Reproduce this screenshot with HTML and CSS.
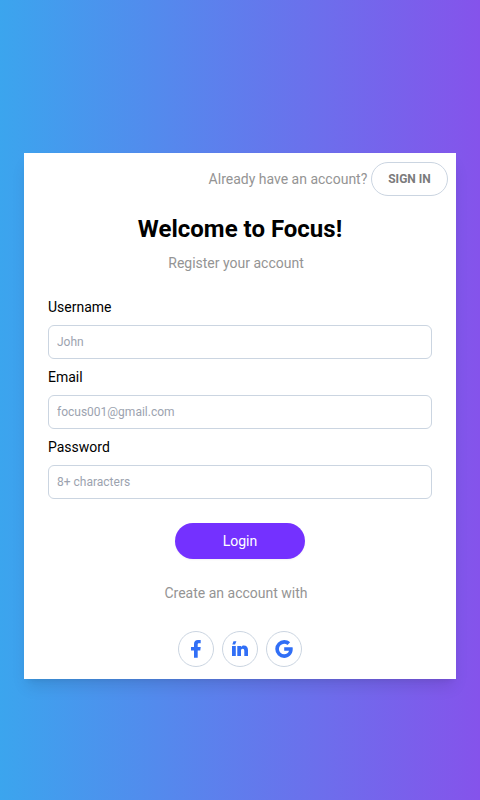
FILE: index.html
```html
<!DOCTYPE html>
<html lang="en">
<head>
<meta charset="utf-8">
<title>Focus</title>
<link rel="stylesheet" href="styles.css">
</head>
<body>
<main class="card">
  <div class="top"><span class="muted">Already have an account?</span><button class="signin">SIGN IN</button></div>
  <h1>Welcome to Focus!</h1>
  <p class="muted sub">Register your account</p>
  <form class="form">
    <label for="u">Username</label>
    <input id="u" type="text" placeholder="John">
    <label for="e">Email</label>
    <input id="e" type="text" placeholder="focus001@gmail.com">
    <label for="p">Password</label>
    <input id="p" type="password" placeholder="8+ characters">
    <button type="button" class="login">Login</button>
  </form>
  <p class="muted with">Create an account with</p>
  <div class="social">
    <a class="icon"><svg viewBox="0 0 20 20"><path d="M8 18.700V11.500H5V8h3V5.200C8 2.400 9.500 1 12 1h2.700v3.200h-1.600c-1 0-1.400.5-1.400 1.400V8h3l-.4 3.500h-2.600v7.200z"/></svg></a>
    <a class="icon"><svg viewBox="0 0 20 20"><path d="M2 7h3.800v10H2zM2.300 5.600 3.500 2.300h2.900L5.100 5.600zM7.300 7h3.700v1.100C11.500 7.200 12.500 6.600 13.800 6.600c2.800 0 4.200 1.700 4.200 4.700V17h-3.700v-5.100c0-1.500-.5-2.200-1.600-2.200-1.200 0-1.700.8-1.700 2.200V17H7.300z"/></svg></a>
    <a class="icon"><svg viewBox="0 0 24 24"><path transform="translate(-2.100 -2.400) scale(1.200)" d="M20.283 10.356h-8.327v3.451h4.792c-.446 2.193-2.313 3.453-4.792 3.453a5.27 5.27 0 0 1-5.279-5.28 5.27 5.27 0 0 1 5.279-5.279c1.259 0 2.397.447 3.29 1.178l2.6-2.599c-1.584-1.381-3.615-2.233-5.89-2.233a8.908 8.908 0 0 0-8.934 8.934 8.907 8.907 0 0 0 8.934 8.934c4.467 0 8.529-3.249 8.529-8.934 0-.528-.081-1.097-.202-1.625z"/></svg></a>
  </div>
</main>
</body>
</html>
```
FILE: styles.css
```css
* { box-sizing: border-box; margin: 0; }
body {
  height: 800px;
  padding: 153px 24px 0;
  font: 14px/20px Roboto, sans-serif;
  background: linear-gradient(to right, #3ba5ee, #8553eb);
}
button, input { font-family: inherit; }
.card {
  display: flex;
  flex-direction: column;
  height: 526px;
  padding: 9px 8px 0;
  background: #fff;
  box-shadow: 0 10px 15px -3px rgba(0,0,0,.1), 0 4px 6px -4px rgba(0,0,0,.1);
}
.top { display: flex; justify-content: flex-end; align-items: center; gap: 3.7px; }
.muted { color: #949494; }
.signin {
  width: 77px;
  height: 34px;
  padding: 0;
  border: 1px solid #cbd5e1;
  border-radius: 17px;
  background: #fff;
  color: #7b7b7b;
  font-size: 12px;
  font-weight: 700;
}
h1 { margin-top: 17px; font-size: 24px; line-height: 32px; text-align: center; }
.sub { margin-top: 8px; padding-right: 8px; text-align: center; }
.form { display: flex; flex-direction: column; padding: 24px 16px 0; }
input {
  height: 34px;
  margin: 8px 0;
  padding: 0 8px;
  border: 1px solid #cbd5e1;
  border-radius: 6px;
  font-size: 12px;
}
input::placeholder { color: #9ca3af; opacity: 1; }
.login {
  align-self: center;
  width: 130px;
  height: 36px;
  margin-top: 16px;
  border: 0;
  border-radius: 18px;
  background: #7431ff;
  box-shadow: 0 1px 2px rgba(0,0,0,.05);
  color: #fff;
  font-size: 14px;
}
.with { margin-top: 24px; padding-right: 8px; text-align: center; }
.social { display: flex; justify-content: center; gap: 8px; margin-top: 28px; }
.icon {
  display: flex;
  justify-content: center;
  align-items: center;
  width: 36px;
  height: 36px;
  border: 1px solid #cbd5e1;
  border-radius: 50%;
}
.icon svg { width: 20px; height: 20px; fill: #316ff6; }
```
